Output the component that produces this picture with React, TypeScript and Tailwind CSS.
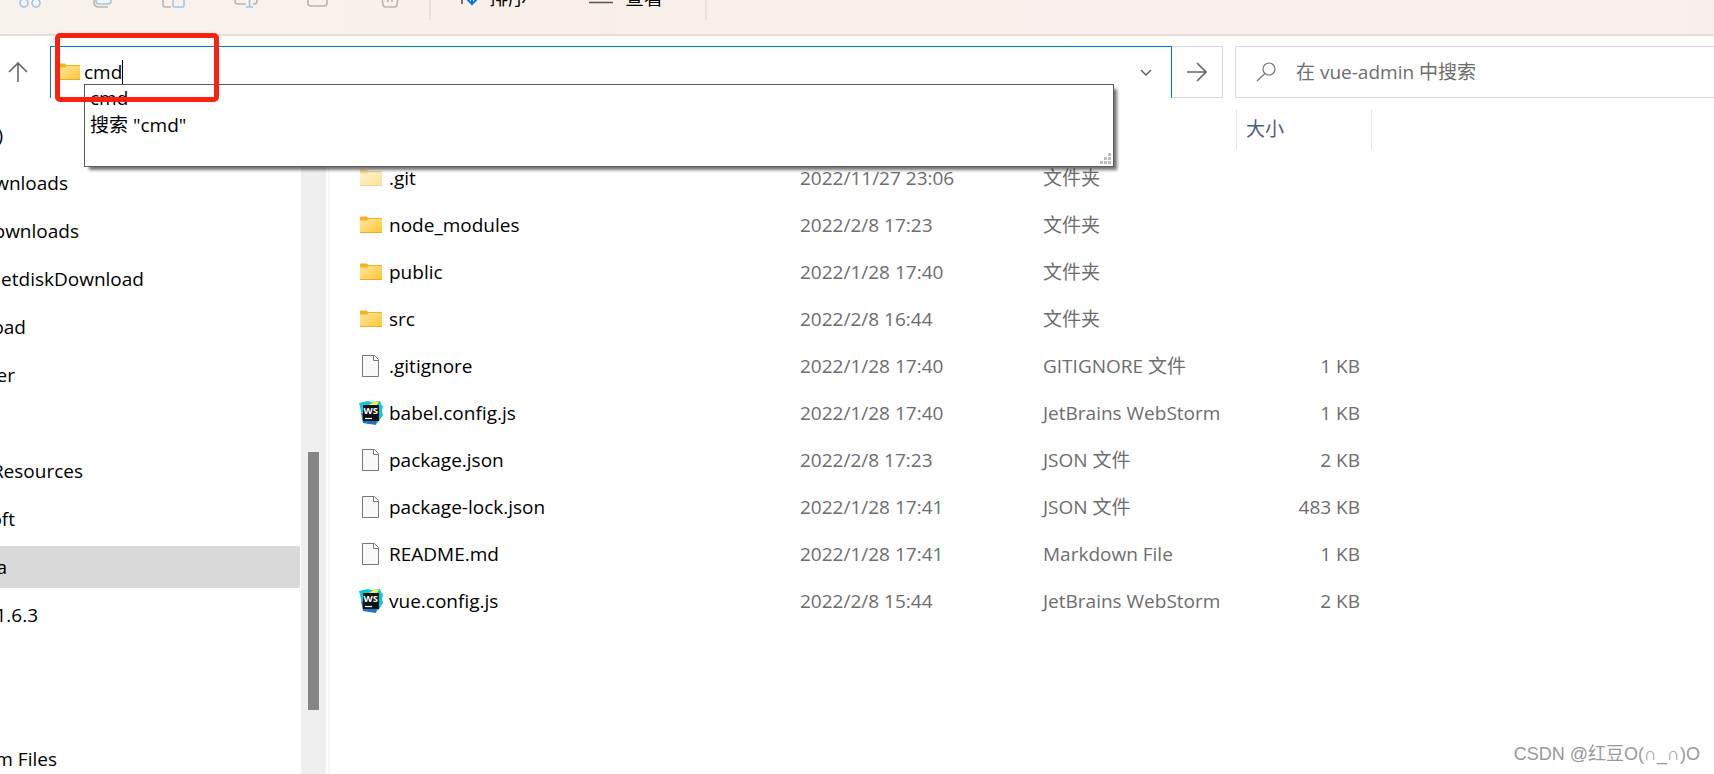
import React from 'react';

type FileKind = 'folder' | 'hidden-folder' | 'file' | 'webstorm';

interface FileEntry {
  name: string;
  kind: FileKind;
  modified: string;
  type: string;
  size?: string;
}

const files: FileEntry[] = [
  { name: '.git', kind: 'hidden-folder', modified: '2022/11/27 23:06', type: '文件夹' },
  { name: 'node_modules', kind: 'folder', modified: '2022/2/8 17:23', type: '文件夹' },
  { name: 'public', kind: 'folder', modified: '2022/1/28 17:40', type: '文件夹' },
  { name: 'src', kind: 'folder', modified: '2022/2/8 16:44', type: '文件夹' },
  { name: '.gitignore', kind: 'file', modified: '2022/1/28 17:40', type: 'GITIGNORE 文件', size: '1 KB' },
  { name: 'babel.config.js', kind: 'webstorm', modified: '2022/1/28 17:40', type: 'JetBrains WebStorm', size: '1 KB' },
  { name: 'package.json', kind: 'file', modified: '2022/2/8 17:23', type: 'JSON 文件', size: '2 KB' },
  { name: 'package-lock.json', kind: 'file', modified: '2022/1/28 17:41', type: 'JSON 文件', size: '483 KB' },
  { name: 'README.md', kind: 'file', modified: '2022/1/28 17:41', type: 'Markdown File', size: '1 KB' },
  { name: 'vue.config.js', kind: 'webstorm', modified: '2022/2/8 15:44', type: 'JetBrains WebStorm', size: '2 KB' }
];

// The tree is scrolled sideways, so each label only keeps its right-hand end
const treeItems = [
  { label: ')', width: 'w-[3px]' },
  { label: 'wnloads', width: 'w-[68px]' },
  { label: 'ownloads', width: 'w-[79px]' },
  { label: 'NetdiskDownload', width: 'w-[144px]' },
  { label: 'oad', width: 'w-[26px]' },
  { label: 'er', width: 'w-[15px]' },
  { label: '', width: 'w-0' },
  { label: 'Resources', width: 'w-[83px]' },
  { label: 'oft', width: 'w-[15px]' },
  { label: 'a', width: 'w-[7px]', selected: true },
  { label: '1.6.3', width: 'w-[38px]' },
  { label: '', width: 'w-0' },
  { label: '', width: 'w-0' },
  { label: 'm Files', width: 'w-[57px]' }
];

const FolderIcon: React.FC<{ faded?: boolean }> = ({ faded }) => (
  <svg viewBox="0 0 24 24" className={faded ? 'h-6 w-6 shrink-0 opacity-50' : 'h-6 w-6 shrink-0'}>
    <defs>
      <linearGradient id="folder" x1="0" y1="0" x2="1" y2="1">
        <stop offset="0" stopColor="#ffe7a0" />
        <stop offset="1" stopColor="#fdc52f" />
      </linearGradient>
    </defs>
    <path d="M1 4.5a1 1 0 0 1 1-1h5.5L9.5 5H23v4H1z" fill="#f6b21b" />
    <path d="M1 7.5h7L9.5 6H23v14H1z" fill="url(#folder)" />
    <path d="M1 19.5h22" stroke="#e9a92a" />
  </svg>
);

const DocumentIcon = () => (
  <svg viewBox="0 0 24 24" className="h-6 w-6 shrink-0" fill="#f9f9f9" stroke="#777">
    <path d="M3.5 1.5h12l4 4v17h-16z" />
    <path d="M14.5 1.5v5h5" fill="#fff" />
  </svg>
);

const WebStormIcon = () => (
  <svg viewBox="0 0 24 24" className="h-6 w-6 shrink-0">
    <path d="M0 2l9-2 3 1 9-1 1.500 4 1.500 1-1 5 1 4-4 6-3 3-12-1z" fill="#08c8dc" />
    <path d="M2 12l2 10 13 2 1-6z" fill="#1d75c9" />
    <path d="M10 4l5-3.500h5L18 4z" fill="#f5ee47" />
    <path d="M4 4h16v16H4z" fill="#111" />
    <text x="4.5" y="12.500" fontSize="9.5" fontWeight="700" fill="#fff" fontFamily="Open Sans, sans-serif">WS</text>
    <path d="M6 17.500h7" stroke="#fff" strokeWidth="1.2" />
  </svg>
);

const FileIcon: React.FC<{ kind: FileKind }> = ({ kind }) => {
  if (kind === 'file') return <DocumentIcon />;
  if (kind === 'webstorm') return <WebStormIcon />;
  return <FolderIcon faded={kind === 'hidden-folder'} />;
};

const toolbarActions = [
  {
    label: 'Cut',
    drawing: (
      <>
        <path d="M10 2l9 16M22 2l-9 16" stroke="#b9b4b1" />
        <circle cx="10" cy="21" r="4" stroke="#9cc7e8" />
        <circle cx="22" cy="21" r="4" stroke="#9cc7e8" />
      </>
    )
  },
  {
    label: 'Copy',
    drawing: (
      <>
        <path d="M8 8v12q0 5 5 5h9" stroke="#b9b4b1" />
        <rect x="10" y="4" width="15" height="18" rx="3" stroke="#9cc7e8" />
      </>
    )
  },
  {
    label: 'Paste',
    drawing: (
      <>
        <path d="M13 25H7q-2 0-2-2V5h14" stroke="#b9b4b1" />
        <rect x="15" y="12" width="11" height="13" rx="1.5" stroke="#9cc7e8" />
      </>
    )
  },
  {
    label: 'Rename',
    drawing: (
      <>
        <path d="M16 10H5v9q0 3 3 3h8M22 10h5v9q0 3-3 3h-1" stroke="#b9b4b1" />
        <path d="M19.500 6v19M16 25h7" stroke="#9cc7e8" />
      </>
    )
  },
  {
    label: 'Share',
    drawing: <path d="M6 10v11q0 3 3 3h13q3 0 3-3V10M11 18l4-4M20 18l2-2" stroke="#b9b4b1" />
  },
  {
    label: 'Delete',
    drawing: <path d="M7 8l2 15q.5 2 2.500 2h9q2 0 2.500-2l2-15M14 10v10M18 10v10" stroke="#b9b4b1" />
  }
];

const Toolbar = () => (
  <header className="flex h-9 shrink-0 items-end overflow-hidden border-b-2 border-[#e7dcd9] bg-linear-to-r from-[#f8f2ec] via-[#f9efea] via-35% to-[#faeeed]">
    <div className="flex h-[72px] shrink-0 items-center">
      <div className="flex gap-10 pr-[23px] pl-[14px]">
        {toolbarActions.map((action) => (
          <button key={action.label} type="button" aria-label={action.label}>
            <svg viewBox="0 0 32 32" className="h-8 w-8" fill="none" strokeWidth="1.6">
              {action.drawing}
            </svg>
          </button>
        ))}
      </div>
      <div className="h-11 w-0.5 bg-[#eae0dc]" />
      <button type="button" className="ml-[22px] flex items-center gap-1">
        <svg viewBox="0 0 32 32" className="h-8 w-8" fill="none" strokeWidth="1.6">
          <path d="M9 22V6M5 10l4-4 4 4" stroke="#555" />
          <path d="M19 6v16M14 17l5 5 5-5" stroke="#0078d4" strokeWidth="2" />
        </svg>
        排序
      </button>
      <button type="button" className="ml-[58px] flex items-center gap-2">
        <svg viewBox="0 0 32 32" className="h-8 w-8" stroke="#555" strokeWidth="1.6">
          <path d="M4 8h24M4 14h24M4 20.500h24" />
        </svg>
        查看
      </button>
      <div className="ml-[42px] h-11 w-0.5 bg-[#ebe0de]" />
    </div>
  </header>
);

const Suggestions = () => (
  <div className="absolute top-[37px] right-[57px] left-[33px] z-10 h-[83px] border border-[#5c5c5c] bg-white px-[5px] shadow-[4px_4px_3px_-1px_rgba(0,0,0,0.55)]">
    <ul className="leading-[27px]">
      <li>cmd</li>
      <li>搜索 "cmd"</li>
    </ul>
    <svg viewBox="0 0 11 11" className="absolute right-0.5 bottom-0.5 h-[11px] w-[11px]" fill="#bdbdbd">
      <path d="M8 0h3v3H8zM4 4h3v3H4zM8 4h3v3H8zM0 8h3v3H0zM4 8h3v3H4zM8 8h3v3H8z" />
    </svg>
  </div>
);

const AddressRow = () => (
  <div className="flex shrink-0 pt-[10px]">
    <button type="button" aria-label="Up" className="flex h-[52px] w-[50px] items-center pl-2">
      <svg viewBox="0 0 20 20" className="h-5 w-5" fill="none" stroke="#666" strokeWidth="1.6">
        <path d="M10 20V1M1 10l9-9 9 9" />
      </svg>
    </button>

    <div className="relative flex h-[52px] flex-1 items-center border border-b-0 border-[#0078d4] pr-[18px] pb-0.5 pl-[6px]">
      <FolderIcon />
      <input
        aria-label="Address"
        defaultValue="cmd"
        className="ml-[3px] field-sizing-content bg-transparent outline-none"
      />
      <span className="h-6 w-px bg-black" />
      <button type="button" aria-label="History" className="ml-auto">
        <svg viewBox="0 0 14 14" className="h-3.5 w-3.5" fill="none" stroke="#555" strokeWidth="1.3">
          <path d="M2 5l5 5 5-5" />
        </svg>
      </button>
      <Suggestions />
      {/* red marker around the typed command */}
      <div className="pointer-events-none absolute -top-[14px] left-1 z-20 h-[69px] w-[164px] rounded-[5px] border-[5px] border-[#ff2010]" />
    </div>

    <button
      type="button"
      aria-label="Go"
      className="flex h-[52px] w-[51px] items-center justify-center border border-l-0 border-[#d9d9d9]"
    >
      <svg viewBox="0 0 20 20" className="h-5 w-5" fill="none" stroke="#666" strokeWidth="1.6">
        <path d="M0 10h19M10 1l9 9-9 9" />
      </svg>
    </button>

    <div className="ml-3 flex h-[52px] w-[479px] items-center border border-r-0 border-[#d9d9d9] pl-5">
      <svg viewBox="0 0 20 20" className="h-5 w-5 shrink-0" fill="none" stroke="#777" strokeWidth="1.2">
        <circle cx="13" cy="7" r="6" />
        <path d="M9 11.500L1 19" />
      </svg>
      <input
        type="search"
        aria-label="Search"
        placeholder="在 vue-admin 中搜索"
        className="ml-5 w-full bg-transparent outline-none placeholder:text-[#6d6d6d]"
      />
    </div>
  </div>
);

const TreePane = () => (
  <aside className="flex w-[330px] shrink-0 border-r-2 border-[#f7f7f7]">
    <ul className="flex w-[301px] flex-col gap-1.5 pt-4">
      {treeItems.map((item, index) => (
        <li
          key={index}
          className={
            item.selected
              ? 'mr-px flex h-[42px] shrink-0 items-center rounded-r-xs bg-[#d9d9d9]'
              : 'mr-px flex h-[42px] shrink-0 items-center'
          }
        >
          <span className={`flex justify-end overflow-hidden whitespace-nowrap ${item.width}`}>{item.label}</span>
        </li>
      ))}
    </ul>
    <div className="flex w-[25px] justify-center bg-[#efefef] pt-[354px]">
      <div className="h-[258px] w-[11px] bg-[#858585]" />
    </div>
  </aside>
);

const FileTable = () => (
  <main className="min-w-0 flex-1">
    <table className="table-fixed text-left text-[#6d6d6d]">
      <colgroup>
        <col className="w-[470px]" />
        <col className="w-[243px]" />
        <col className="w-[193px]" />
        <col className="w-[136px]" />
      </colgroup>
      <thead>
        <tr className="h-14 align-top">
          <td />
          <td />
          <td />
          <th scope="col" className="pt-[11px] font-normal">
            <div className="flex h-10 items-center border-x border-[#e3e3e3] pl-[9px] text-[#4c607a]">大小</div>
          </th>
        </tr>
      </thead>
      <tbody>
        {files.map((file) => (
          <tr key={file.name} className="h-[47px]">
            <td className="pl-[29px]">
              <div className="flex items-center gap-1.5 text-black">
                <FileIcon kind={file.kind} />
                {file.name}
              </div>
            </td>
            <td>{file.modified}</td>
            <td>{file.type}</td>
            <td className="pr-3 text-right">{file.size}</td>
          </tr>
        ))}
      </tbody>
    </table>
  </main>
);

const App: React.FC = () => {
  return (
    <div className="relative flex h-screen flex-col overflow-hidden bg-white font-['Open_Sans','Noto_Sans_CJK_SC',sans-serif] text-[19px] leading-6 text-black">
      <Toolbar />
      <AddressRow />
      <div className="flex min-h-0 flex-1">
        <TreePane />
        <FileTable />
      </div>
      <div className="absolute right-[14px] bottom-1.5 font-['Liberation_Sans','Noto_Sans_CJK_SC',sans-serif] text-lg text-[#999]">
        CSDN @红豆O(∩_∩)O
      </div>
    </div>
  );
};

export default App;
